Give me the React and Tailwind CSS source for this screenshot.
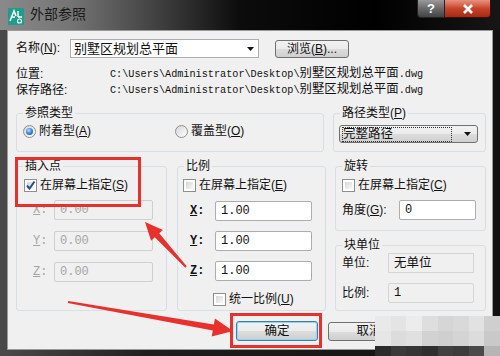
import React from "react";

const cjk = "font-['Liberation_Sans','Noto_Sans_CJK_SC',sans-serif]";
const mono = "font-['Liberation_Mono','Noto_Sans_CJK_SC',monospace]";

function Check({ checked }) {
  return (
    <span className="w-[13px] h-[13px] shrink-0 border border-[#8e8f8f] bg-white p-[2px] flex">
      <span className="flex-1 bg-gradient-to-br from-[#d8d8d8] to-[#f7f7f7] flex items-center justify-center">
        {checked && (
          <svg width="11" height="11" viewBox="0 0 11 11" className="-m-[2px]">
            <path d="M2 5.5 L4.5 8.5 L9.5 1.5" fill="none" stroke="#2e4a8f" strokeWidth="2" />
          </svg>
        )}
      </span>
    </span>
  );
}

function Radio({ on }) {
  return (
    <span className="w-[13px] h-[13px] shrink-0 rounded-full border border-[#8e8f8f] bg-gradient-to-br from-[#d6d6d6] to-white flex items-center justify-center">
      {on && <span className="w-[7px] h-[7px] rounded-full bg-[radial-gradient(circle_at_40%_35%,#bfe4ff_0%,#3b8be0_45%,#17489c_100%)]" />}
    </span>
  );
}

function Field({ value, disabled, gray, w }) {
  return (
    <div
      className={`${w} h-[20px] shrink-0 border rounded-[2px] flex items-center px-[5px] text-[12px] ${mono} ${
        disabled ? "border-[#cfcfcf] bg-[#f0f0f0] text-[#a5a5a5]" : gray ? "border-[#d5d5d5] bg-[#f0f0f0] text-[#111]" : "border-[#abadb3] bg-white text-[#111]"
      }`}
    >
      {value}
    </div>
  );
}

function Arrow({ className = "" }) {
  return (
    <svg width="7" height="4" viewBox="0 0 7 4" className={className}>
      <path d="M0 0 H7 L3.5 4 Z" fill="#111" />
    </svg>
  );
}

function Group({ title, className, children }) {
  return (
    <fieldset className={`border border-[#d5dfe5] rounded-[3px] shrink-0 ${className}`}>
      <legend className="ml-[6px] px-[2px] text-[12px] leading-[14px] text-[#111]">{title}</legend>
      {children}
    </fieldset>
  );
}

function XYZRow({ label, value, disabled, labelW, inputW, mt, ml }) {
  return (
    <div className={`flex items-center ${mt} ${ml}`}>
      <span className={`${labelW} text-[12px] ${mono} ${disabled ? "text-[#a5a5a5]" : "text-[#111] font-bold"}`}>
        <u>{label}</u>:
      </span>
      <Field value={value} disabled={disabled} w={inputW} />
    </div>
  );
}

function PathText() {
  return (
    <span className={`${mono} text-[10.2px]`}>
      {"C:\\Users\\Administrator\\Desktop\\"}
      <span className="text-[12.4px]">别墅区规划总平面</span>.dwg
    </span>
  );
}

const mosaic = [
  ["#e9e9e9", "#e4e4e4", "#ececec", "#dedede", "#d6d6d6", "#d9d9d9", "#e2e2e2", "#cfcfcf"],
  ["#e6e6e6", "#dcdcdc", "#e0e0e0", "#d2d2d2", "#cfcfcf", "#d4d4d4", "#dcdcdc", "#c9c9c9"],
  ["#2b2b2b", "#3a3a3a", "#353535", "#2f2f2f", "#404040", "#3c3c3c", "#4a4a4a", "#b5b5b5"],
];

const btnBg = "bg-[linear-gradient(#f2f2f2_0%,#ebebeb_50%,#dddddd_51%,#cfcfcf_100%)]";

export default function App() {
  return (
    <div className={`relative w-[500px] h-[356px] overflow-hidden bg-[linear-gradient(to_right,#4a4a4a_0%,#1e1e1e_30%,#111_100%)] flex flex-col ${cjk}`}>
      {/* title bar */}
      <div className="h-[30px] shrink-0 flex items-start bg-[linear-gradient(to_right,#8a8a8a_0%,#757575_14%,#454545_30%,#0c0c0c_48%,#000_75%,#161616_100%)]">
        <svg width="16" height="17" viewBox="0 0 16 17" className="ml-[8px] mt-[8px]">
          <rect width="16" height="17" fill="#1f9c8c" />
          <path d="M2 13 L6 3 L8 8 M4 9 H7" fill="none" stroke="#fff" strokeWidth="1.6" />
          <path d="M10 3 V9 M10 9 H14" fill="none" stroke="#fff" strokeWidth="1.4" />
          <circle cx="11.5" cy="13" r="2" fill="none" stroke="#fff" strokeWidth="1.2" />
        </svg>
        <span className="ml-[6px] mt-[6px] text-[14px] leading-[17px] text-[#1a1a1a]">外部参照</span>
        <div className="ml-auto mr-[9px] flex">
          <div className="w-[28px] h-[18px] rounded-bl-[4px] border border-t-0 border-[#222] bg-gradient-to-b from-[#9a9a9a] via-[#6a6a6a] to-[#444] flex items-center justify-center text-white text-[13px] font-bold font-['Liberation_Sans',sans-serif]">?</div>
          <div className="w-[46px] h-[18px] rounded-br-[4px] border border-t-0 border-l-0 border-[#3a1008] bg-gradient-to-b from-[#e7917e] via-[#c7432a] to-[#a52a15] flex items-center justify-center">
            <svg width="12" height="10" viewBox="0 0 12 10">
              <path d="M2 1 L10 9 M10 1 L2 9" stroke="#fff" strokeWidth="2.6" />
            </svg>
          </div>
        </div>
      </div>

      {/* client area */}
      <div className="mx-[7px] h-[320px] shrink-0 border border-[#9a9a9a] bg-[#f0f0f0] pl-[8px] pt-[8px] text-[#111] text-[12px] flex flex-col">
        <div className="flex items-start h-[19px]">
          <span className="w-[54px] leading-[19px]">名称(<u>N</u>):</span>
          <div className="w-[189px] h-[19px] border border-[#abadb3] bg-white flex items-center pl-[3px] pr-[4px] text-[13px]">
            <span className="flex-1">别墅区规划总平面</span>
            <Arrow />
          </div>
          <button className={`ml-[16px] mt-[1px] w-[74px] h-[18px] rounded-[3px] border border-[#707070] ${btnBg} text-[12px] leading-[16px]`}>
            浏览(<u>B</u>)...
          </button>
        </div>
        <div className="mt-[8px] h-[16px] flex items-center">
          <span className="w-[94px]">位置:</span>
          <PathText />
        </div>
        <div className="h-[16px] flex items-center">
          <span className="w-[94px]">保存路径:</span>
          <PathText />
        </div>

        {/* row A */}
        <div className="mt-[8px] flex">
          <Group title="参照类型" className="w-[308px] h-[46px]">
            <div className="mt-[4px] ml-[6px] flex items-center h-[14px]">
              <div className="w-[152px] flex items-center gap-[3px]">
                <Radio on />
                <span>附着型(<u>A</u>)</span>
              </div>
              <div className="flex items-center gap-[3px]">
                <Radio />
                <span>覆盖型(<u>O</u>)</span>
              </div>
            </div>
          </Group>
          <Group title={<span>路径类型(<u>P</u>)</span>} className="ml-[9px] w-[153px] h-[46px]">
            <div className={`mt-[5px] ml-[5px] w-[139px] h-[18px] rounded-[3px] border border-[#707070] ${btnBg} flex items-center pl-[2px] pr-[6px]`}>
              <span className="w-[110px] border border-dotted border-[#333] leading-[13px] text-[12.5px]">完整路径</span>
              <Arrow className="ml-auto" />
            </div>
          </Group>
        </div>

        {/* row B */}
        <div className="mt-[7px] flex items-start">
          <Group title="插入点" className="w-[151px] h-[152px]">
            <div className="mt-[5px] ml-[7px] flex items-center gap-[3px] h-[14px]">
              <Check checked />
              <span>在屏幕上指定(<u>S</u>)</span>
            </div>
            <XYZRow label="X" value="0.00" disabled labelW="w-[21px]" inputW="w-[99px]" mt="mt-[8px]" ml="ml-[16px]" />
            <XYZRow label="Y" value="0.00" disabled labelW="w-[21px]" inputW="w-[99px]" mt="mt-[11px]" ml="ml-[16px]" />
            <XYZRow label="Z" value="0.00" disabled labelW="w-[21px]" inputW="w-[99px]" mt="mt-[11px]" ml="ml-[16px]" />
          </Group>

          <Group title="比例" className="ml-[10px] w-[149px] h-[152px]">
            <div className="mt-[5px] ml-[5px] flex items-center gap-[3px] h-[14px]">
              <Check />
              <span>在屏幕上指定(<u>E</u>)</span>
            </div>
            <XYZRow label="X" value="1.00" labelW="w-[25px]" inputW="w-[97px]" mt="mt-[9px]" ml="ml-[12px]" />
            <XYZRow label="Y" value="1.00" labelW="w-[25px]" inputW="w-[97px]" mt="mt-[10px]" ml="ml-[12px]" />
            <XYZRow label="Z" value="1.00" labelW="w-[25px]" inputW="w-[97px]" mt="mt-[10px]" ml="ml-[12px]" />
            <div className="mt-[11px] ml-[35px] flex items-center gap-[3px] h-[14px]">
              <Check />
              <span>统一比例(<u>U</u>)</span>
            </div>
          </Group>

          <div className="ml-[9px] flex flex-col">
            <Group title="旋转" className="w-[151px] h-[72px]">
              <div className="mt-[5px] ml-[6px] flex items-center gap-[3px] h-[14px]">
                <Check />
                <span>在屏幕上指定(<u>C</u>)</span>
              </div>
              <div className="mt-[8px] ml-[6px] flex items-center">
                <span className="w-[57px]">角度(<u>G</u>):</span>
                <Field value="0" w="w-[77px]" />
              </div>
            </Group>
            <Group title="块单位" className="mt-[7px] w-[151px] h-[73px]">
              <div className="mt-[1px] ml-[6px] flex items-center">
                <span className="w-[46px]">单位:</span>
                <div className="w-[86px] h-[20px] border border-[#d5d5d5] bg-[#f0f0f0] flex items-center px-[5px] text-[12.5px]">无单位</div>
              </div>
              <div className="mt-[10px] ml-[6px] flex items-center">
                <span className="w-[46px]">比例:</span>
                <Field value="1" gray w="w-[86px]" />
              </div>
            </Group>
          </div>
        </div>

        {/* buttons */}
        <div className="mt-[10px] flex items-start">
          <button className={`ml-[220px] w-[82px] h-[20px] rounded-[3px] border border-[#3c7fb1] shadow-[inset_0_0_0_1px_#8fd4f5] ${btnBg} text-[12.5px] leading-[18px]`}>
            确定
          </button>
          <button className={`ml-[10px] mt-[1px] w-[82px] h-[19px] rounded-[3px] border border-[#707070] ${btnBg} text-[12.5px] leading-[17px]`}>
            取消
          </button>
        </div>
      </div>

      {/* annotation overlays */}
      <div className="absolute left-[15px] top-[157px] w-[126px] h-[50px] border-[3px] border-[#e8302c]" />
      <div className="absolute left-[230px] top-[313px] w-[92px] h-[35px] border-[3px] border-[#e8302c]" />
      <svg className="absolute inset-0 pointer-events-none" width="500" height="356" viewBox="0 0 500 356">
        <polygon
          points="145,222 162.9,229.9 159.2,233.3 186.7,266.3 185.3,267.7 154.8,237.3 151.1,240.7"
          fill="#e8302c"
        />
        <polygon
          points="233,331 214.9,318.6 213.8,324.5 68.2,301 67.8,303 212.8,330.5 211.7,336.4"
          fill="#e8302c"
        />
      </svg>

      {/* watermark mosaic */}
      <div className="absolute left-[375px] top-[316px] w-[125px] h-[40px] flex flex-col">
        {mosaic.map((row, r) => (
          <div key={r} className={`flex ${r === 2 ? "h-[10px]" : "h-[15px]"}`}>
            {row.map((c, i) => (
              <div key={i} className="w-[16px] h-full" style={{ background: c }} />
            ))}
          </div>
        ))}
      </div>
    </div>
  );
}
